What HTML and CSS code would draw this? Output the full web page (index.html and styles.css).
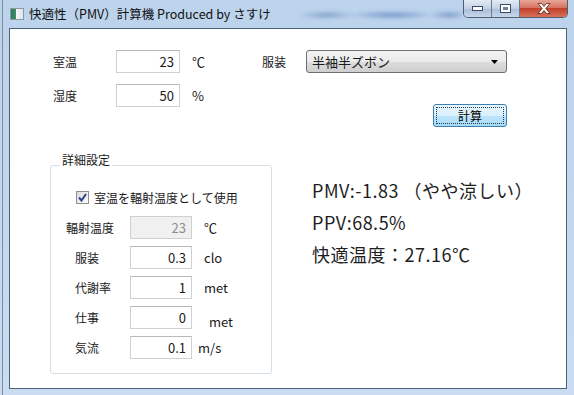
FILE: index.html
```html
<!DOCTYPE html>
<html lang="ja">
<head>
  <meta charset="UTF-8">
  <title>快適性（PMV）計算機</title>
  <link rel="stylesheet" href="styles.css">
</head>
<body>

<div class="window">
  <div class="titlebar">
    <span class="app-icon"></span>
    <span class="title">快適性（PMV）計算機 Produced by さすけ</span>
    <span class="glass-blur"></span>
    <div class="caption-buttons">
      <span class="cap-btn min">
        <svg width="11" height="5" viewBox="0 0 11 5"><rect x="0.5" y="0.5" width="10" height="4" fill="#fff" stroke="#3c4d63"/></svg>
      </span>
      <span class="cap-btn max">
        <svg width="11" height="9" viewBox="0 0 11 9"><rect x="0.5" y="0.5" width="10" height="8" fill="#fff" stroke="#3c4d63"/><rect x="3" y="3" width="5" height="3" fill="#6f8099"/></svg>
      </span>
      <span class="cap-btn close">
        <svg width="14" height="11" viewBox="0 0 14 11"><path d="M1 0.5h3.5l2.5 3 2.5-3h3.5l-4.2 5 4.2 5h-3.5l-2.5-3-2.5 3h-3.5l4.2-5z" fill="#fff" stroke="#5a1f18" stroke-width="0.8"/></svg>
      </span>
    </div>
  </div>

  <div class="client">
    <div class="top">
      <div class="fields">
        <div class="row">
          <span class="label">室温</span>
          <span class="textbox">23</span>
          <span class="unit">℃</span>
        </div>
        <div class="row">
          <span class="label">湿度</span>
          <span class="textbox">50</span>
          <span class="unit">%</span>
        </div>
      </div>
      <div class="clothing">
        <div class="row">
          <span class="label short">服装</span>
          <span class="combo">半袖半ズボン
            <svg class="combo-arrow" width="7" height="4" viewBox="0 0 7 4"><path d="M0 0h7l-3.5 4z" fill="#000"/></svg>
          </span>
        </div>
        <button class="calc" type="button"><span class="focus">計算</span></button>
      </div>
    </div>

    <div class="bottom">
      <fieldset class="group">
        <legend>詳細設定</legend>
        <div class="check-row">
          <span class="checkbox">
            <svg width="9" height="9" viewBox="0 0 9 9"><path d="M1 4.5l2.5 3L8 1" fill="none" stroke="#2b3f8c" stroke-width="2"/></svg>
          </span>
          <span>室温を輻射温度として使用</span>
        </div>
        <div class="g-row">
          <span class="g-label wide">輻射温度</span>
          <span class="textbox small disabled">23</span>
          <span class="unit">℃</span>
        </div>
        <div class="g-row">
          <span class="g-label">服装</span>
          <span class="textbox small">0.3</span>
          <span class="unit">clo</span>
        </div>
        <div class="g-row">
          <span class="g-label">代謝率</span>
          <span class="textbox small">1</span>
          <span class="unit">met</span>
        </div>
        <div class="g-row">
          <span class="g-label">仕事</span>
          <span class="textbox small">0</span>
          <span class="unit low">met</span>
        </div>
        <div class="g-row">
          <span class="g-label">気流</span>
          <span class="textbox small">0.1</span>
          <span class="unit near">m/s</span>
        </div>
      </fieldset>

      <div class="results">
        <div>PMV:-1.83 （やや涼しい）</div>
        <div>PPV:68.5%</div>
        <div>快適温度：27.16℃</div>
      </div>
    </div>
  </div>
</div>

</body>
</html>
```

FILE: styles.css
```css
* {
  box-sizing: border-box;
}

body {
  margin: 0;
  width: 574px;
  height: 395px;
  overflow: hidden;
  background: linear-gradient(#bcd3ec, #c9dcf2);
  font-family: "Noto Sans CJK JP", sans-serif;
  font-size: 12px;
  color: #1a1a1a;
}

.window {
  margin-left: 2px;
  height: 395px;
  border-left: 1px solid #7f8c9b;
}

/* title bar */

.titlebar {
  height: 28px;
  display: flex;
  align-items: flex-start;
  padding-left: 7px;
}

.app-icon {
  width: 14px;
  height: 12px;
  margin-top: 8px;
  border: 1px solid #8c98a4;
  background: linear-gradient(90deg, #2f7a5c 0, #3f8f6e 5px, #f4f6f8 5px, #dfe4ea 100%);
}

.title {
  margin: 6px 0 0 5px;
  font-size: 12.5px;
  line-height: 16px;
  color: #101010;
}

.glass-blur {
  width: 185px;
  height: 12px;
  margin: 9px 0 0 6px;
  background:
    radial-gradient(ellipse 30px 5px at 50px 6px, rgba(70, 110, 170, 0.45), transparent),
    radial-gradient(ellipse 45px 5px at 115px 6px, rgba(60, 100, 175, 0.5), transparent),
    radial-gradient(ellipse 20px 5px at 172px 6px, rgba(60, 95, 170, 0.45), transparent);
  filter: blur(1.5px);
}

.caption-buttons {
  margin-left: auto;
  margin-right: 6px;
  display: flex;
  height: 18px;
  border: 1px solid #4e5f74;
  border-top: none;
  border-radius: 0 0 5px 5px;
  overflow: hidden;
}

.cap-btn {
  display: flex;
  align-items: center;
  justify-content: center;
  height: 100%;
}

.min,
.max {
  width: 28px;
  background: linear-gradient(#e3ebf5, #c2d2e6 50%, #a9bdd7 51%, #c6d7ec);
  border-right: 1px solid #6a7b90;
}

.close {
  width: 47px;
  background: linear-gradient(#e8a797, #d2705c 48%, #c2412c 50%, #d8705a);
}

/* client area */

.client {
  margin-left: 6px;
  width: 558px;
  height: 361px;
  border: 1px solid #4d6178;
  background: #fff;
}

.top {
  display: flex;
  padding: 21px 0 0 43px;
}

.fields {
  display: flex;
  flex-direction: column;
  gap: 11px;
}

.row {
  display: flex;
  align-items: center;
  height: 23px;
}

.label {
  width: 63px;
}

.label.short {
  width: 44px;
}

.textbox {
  width: 64px;
  height: 23px;
  padding-right: 5px;
  border: 1px solid #cdd1d6;
  border-top-color: #b5b9bf;
  text-align: right;
  font-size: 13px;
  line-height: 21px;
}

.textbox.small {
  width: 62px;
}

.textbox.disabled {
  background: #f0f0f0;
  color: #8d8d8d;
  border-color: #cfcfcf;
}

.unit {
  margin-left: 12px;
  width: 70px;
  font-size: 13px;
}

.clothing {
  display: flex;
  flex-direction: column;
}

.combo {
  position: relative;
  width: 201px;
  height: 23px;
  padding-left: 5px;
  border: 1px solid #707070;
  border-radius: 3px;
  background: linear-gradient(#f2f2f2, #ebebeb 50%, #dddddd 51%, #cfcfcf);
  font-size: 13px;
  line-height: 21px;
}

.combo-arrow {
  position: absolute;
  right: 8px;
  top: 9px;
}

.calc {
  align-self: flex-end;
  margin-top: 31px;
  width: 74px;
  height: 23px;
  padding: 2px;
  border: 1px solid #3c7fb1;
  border-radius: 3px;
  background: linear-gradient(#eaf6fd, #d9f0fc 50%, #bee6fd 51%, #a7d9f5);
  font-family: inherit;
  font-size: 12px;
  color: #000;
}

.calc .focus {
  display: block;
  height: 100%;
  line-height: 15px;
  border: 1px dotted #1d3c55;
}

/* details group */

.bottom {
  display: flex;
  margin-top: 26px;
  padding-left: 40px;
}

.group {
  width: 222px;
  min-width: 0;
  margin: 0;
  padding: 0 0 14px 9px;
  border: 1px solid #d5dfe5;
  border-radius: 3px;
}

.group legend {
  padding: 0 2px 10px;
  line-height: 14px;
  font-size: 12px;
}

.check-row {
  display: flex;
  align-items: center;
  gap: 5px;
  height: 23px;
  margin: 9px 0 1px 16px;
}

.checkbox {
  display: flex;
  align-items: center;
  justify-content: center;
  width: 13px;
  height: 13px;
  border: 1px solid #8e8f8f;
  background: linear-gradient(135deg, #dcdcdc, #fbfbfb);
}

.g-row {
  display: flex;
  align-items: center;
  height: 23px;
  margin-top: 7px;
}

.g-row .unit {
  width: auto;
}

.g-label {
  width: 70px;
  padding-left: 15px;
}

.g-label.wide {
  padding-left: 6px;
}

.unit.low {
  margin-left: 17px;
  padding-top: 8px;
}

.unit.near {
  margin-left: 6px;
}

/* results */

.results {
  margin-left: 40px;
  padding-top: 21px;
  font-size: 18px;
  line-height: 32px;
  letter-spacing: 0.5px;
  color: #1e1e1e;
}
```
